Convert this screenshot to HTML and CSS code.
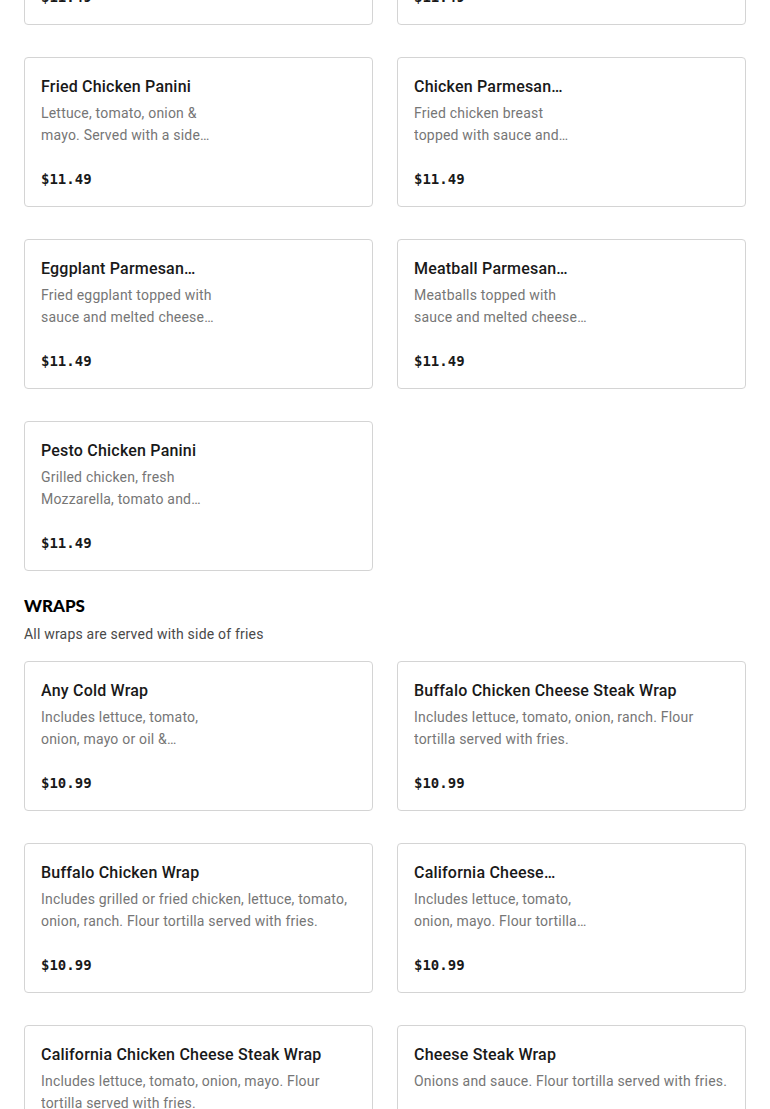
FILE: index.html
```html
<!DOCTYPE html>
<html>
<head>
<meta charset="utf-8">
<link rel="stylesheet" href="styles.css">
</head>
<body>
<div class="page">
  <div class="grid">
    <div class="card"><div class="title narrow">Chicken Cheese Steak Panini</div><div class="desc narrow">Includes lettuce, tomato, onion &amp; mayo. Served with fries.</div><div class="price">$11.49</div></div>
    <div class="card"><div class="title narrow">Chicken Cutlet Panini</div><div class="desc narrow">Includes lettuce, tomato, onion &amp; mayo. Served with fries.</div><div class="price">$11.49</div></div>
    <div class="card"><div class="title">Fried Chicken Panini</div><div class="desc narrow">Lettuce, tomato, onion &amp; mayo. Served with a side of fries.</div><div class="price">$11.49</div></div>
    <div class="card"><div class="title narrow">Chicken Parmesan Panini</div><div class="desc narrow">Fried chicken breast topped with sauce and melted cheese.</div><div class="price">$11.49</div></div>
    <div class="card"><div class="title narrow">Eggplant Parmesan Panini</div><div class="desc narrow">Fried eggplant topped with sauce and melted cheese. Served with fries.</div><div class="price">$11.49</div></div>
    <div class="card"><div class="title narrow">Meatball Parmesan Panini</div><div class="desc narrow">Meatballs topped with sauce and melted cheese. Served with fries.</div><div class="price">$11.49</div></div>
    <div class="card"><div class="title">Pesto Chicken Panini</div><div class="desc narrow">Grilled chicken, fresh Mozzarella, tomato and pesto sauce.</div><div class="price">$11.49</div></div>
  </div>

  <section class="section">
    <h2 class="section-title">WRAPS</h2>
    <p class="section-sub">All wraps are served with side of fries</p>
    <div class="grid">
      <div class="card"><div class="title">Any Cold Wrap</div><div class="desc narrow">Includes lettuce, tomato, onion, mayo or oil &amp; vinegar.</div><div class="price">$10.99</div></div>
      <div class="card"><div class="title">Buffalo Chicken Cheese Steak Wrap</div><div class="desc">Includes lettuce, tomato, onion, ranch. Flour tortilla served with fries.</div><div class="price">$10.99</div></div>
      <div class="card"><div class="title">Buffalo Chicken Wrap</div><div class="desc">Includes grilled or fried chicken, lettuce, tomato, onion, ranch. Flour tortilla served with fries.</div><div class="price">$10.99</div></div>
      <div class="card"><div class="title narrow">California Cheese Steak Wrap</div><div class="desc narrow">Includes lettuce, tomato, onion, mayo. Flour tortilla served with fries.</div><div class="price">$10.99</div></div>
      <div class="card"><div class="title">California Chicken Cheese Steak Wrap</div><div class="desc">Includes lettuce, tomato, onion, mayo. Flour tortilla served with fries.</div><div class="price">$10.99</div></div>
      <div class="card"><div class="title">Cheese Steak Wrap</div><div class="desc">Onions and sauce. Flour tortilla served with fries.</div><div class="price">$10.99</div></div>
    </div>
  </section>
</div>
</body>
</html>
```

FILE: styles.css
```css
html, body {
  margin: 0;
  padding: 0;
  background: #ffffff;
}

.page {
  padding: 0 24px;
  margin-top: -125px;
  font-family: Roboto, "Noto Sans", sans-serif;
  color: #191919;
}

.grid {
  display: grid;
  grid-template-columns: 1fr 1fr;
  column-gap: 24px;
  row-gap: 32px;
}

.card {
  box-sizing: border-box;
  height: 150px;
  border: 1px solid #d4d4d4;
  border-radius: 4px;
  padding: 16px;
  display: flex;
  flex-direction: column;
  overflow: hidden;
}

.title {
  padding-top: 1px;
  font-size: 16px;
  font-weight: 500;
  line-height: 24px;
  letter-spacing: 0.2px;
  color: #191919;
  display: -webkit-box;
  -webkit-line-clamp: 1;
  -webkit-box-orient: vertical;
  overflow: hidden;
}

.desc {
  margin-top: 3px;
  font-size: 14px;
  line-height: 22px;
  color: #767676;
  letter-spacing: 0.2px;
  display: -webkit-box;
  -webkit-line-clamp: 2;
  -webkit-box-orient: vertical;
  overflow: hidden;
}

.narrow {
  max-width: 175px;
}

.price {
  margin-top: auto;
  font-family: "DejaVu Sans Mono", "Liberation Mono", monospace;
  font-weight: 700;
  font-size: 14px;
  line-height: 20px;
  color: #191919;
  padding-bottom: 1px;
}

.section {
  margin-top: 24px;
}

.section-title {
  margin: 0;
  font-family: Lato, "Liberation Sans", sans-serif;
  font-weight: 900;
  font-size: 17px;
  line-height: 22px;
  color: #000;
}

.section-sub {
  margin: 6px 0 16px;
  font-size: 14px;
  line-height: 22px;
  letter-spacing: 0.2px;
  color: #494949;
}
```
